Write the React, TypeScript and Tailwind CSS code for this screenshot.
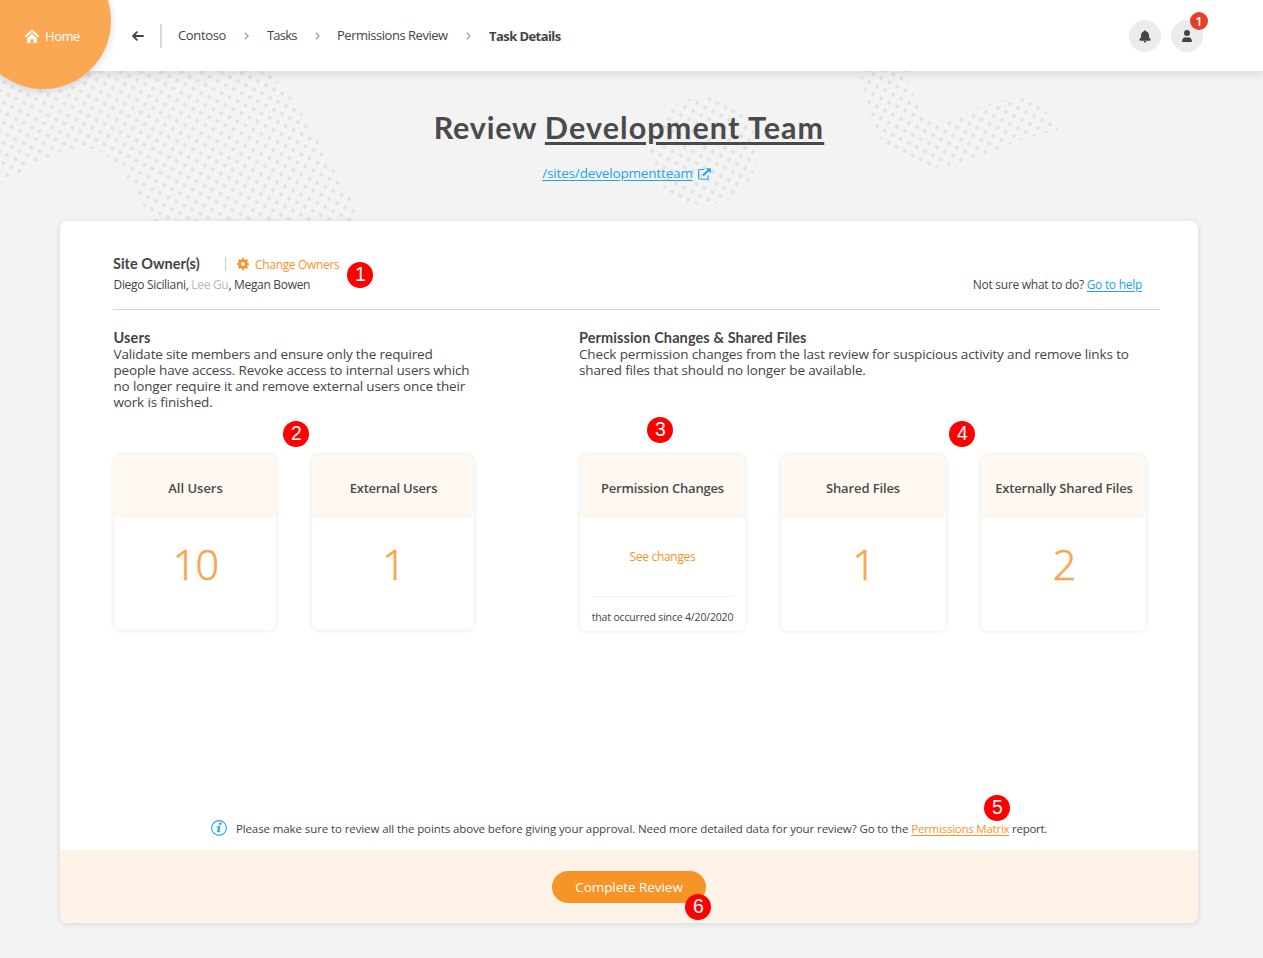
import type { ReactNode } from "react";

function DotPattern() {
  return (
    <svg className="absolute left-0 top-0" width="1263" height="222" viewBox="0 0 1263 222" aria-hidden="true">
      <defs>
        <pattern id="dots-left" width="9.01" height="9.01" patternUnits="userSpaceOnUse" patternTransform="translate(92.1 148) rotate(27.2) translate(-4.505 -4.505)">
          <circle cx="4.505" cy="4.505" r="2.05" fill="#e2e2e2" />
        </pattern>
        <pattern id="dots-middle" width="9.01" height="9.01" patternUnits="userSpaceOnUse" patternTransform="translate(709.4 99.2) rotate(27.2) translate(-4.505 -4.505)">
          <circle cx="4.505" cy="4.505" r="2.05" fill="#e2e2e2" />
        </pattern>
        <pattern id="dots-right" width="9.01" height="9.01" patternUnits="userSpaceOnUse" patternTransform="translate(937.2 127.2) rotate(27.2) translate(-4.505 -4.505)">
          <circle cx="4.505" cy="4.505" r="2.05" fill="#e2e2e2" />
        </pattern>
      </defs>
      <path
        fill="url(#dots-left)"
        d="M0 60H258Q276 78 290 96Q304 115 319 143L351 199L359 222H153Q148 213 134 189L123 171Q108 150 83 147Q60 149 32 166L0 184Z"
      />
      <circle cx="703.5" cy="151" r="54" fill="url(#dots-middle)" />
      <path
        fill="url(#dots-right)"
        d="M858 60H903L908 80L919 109Q925 120 940 121Q955 119 985 105L1010 98Q1030 95 1047 112L1059 129Q1058 132 1045 133L1021 140L985 154L956 167Q935 169 917 163Q890 155 880 137Q870 115 862 81Z"
      />
    </svg>
  );
}

function HomeIcon() {
  return (
    <svg width="14" height="15" viewBox="0 0 14 15" fill="none">
      <path d="M1 7.3L7 1.7L13 7.3" stroke="white" strokeWidth="2" strokeLinecap="round" strokeLinejoin="round" />
      <path d="M2.2 9.2L7 4.9L11.8 9.2V13.2Q11.8 14 11 14H8.6V10.8Q8.6 10 7 10Q5.4 10 5.4 10.8V14H3Q2.2 14 2.2 13.2Z" fill="white" />
    </svg>
  );
}

function BackArrow() {
  return (
    <svg width="12" height="10" viewBox="0 0 12 10" fill="none" stroke="#444" strokeWidth="1.8" strokeLinecap="round" strokeLinejoin="round">
      <path d="M11 5H1.4M4.9 1.2L1.1 5L4.9 8.8" />
    </svg>
  );
}

function Chevron() {
  return (
    <svg className="shrink-0" width="5" height="8" viewBox="0 0 5 8" fill="none" stroke="#a6a6a6" strokeWidth="1.4">
      <path d="M0.8 0.8L4 4L0.8 7.2" />
    </svg>
  );
}

function BellIcon() {
  return (
    <svg width="12" height="13" viewBox="0 0 12 13" fill="#444">
      <path d="M6 0.3Q6.9 0.3 6.9 1.3Q9.7 2 9.8 5Q9.9 8.2 11.6 9.3Q12 10.6 11 10.7H1Q0 10.6 0.4 9.3Q2.1 8.2 2.2 5Q2.3 2 5.1 1.3Q5.1 0.3 6 0.3Z" />
      <path d="M4.6 11H7.4Q7.2 12.5 6 12.5Q4.8 12.5 4.6 11Z" />
    </svg>
  );
}

function PersonIcon() {
  return (
    <svg width="10" height="12" viewBox="0 0 10 12" fill="#444">
      <circle cx="5" cy="3" r="3" />
      <path d="M0 12Q0.1 7.2 3.6 7.2Q5 7.8 6.4 7.2Q9.9 7.2 10 12Z" />
    </svg>
  );
}

function ExternalIcon() {
  return (
    <svg width="13" height="12" viewBox="0 0 13 12" fill="none">
      <path d="M6.3 1.5H2Q0.6 1.5 0.6 2.9V9.9Q0.6 11.3 2 11.3H8.8Q10.2 11.3 10.2 9.9V7.4" stroke="#23a3ee" strokeWidth="1.1" />
      <path d="M4.9 7.6L10.6 2.3" stroke="#23a3ee" strokeWidth="2" />
      <path d="M7.8 0.2H12.9V5.3Z" fill="#23a3ee" />
    </svg>
  );
}

function GearIcon() {
  return (
    <svg width="12" height="12" viewBox="0 0 12 12">
      <g fill="#f79428">
        <rect x="4.8" y="0" width="2.4" height="12" rx="0.4" />
        <rect x="4.8" y="0" width="2.4" height="12" rx="0.4" transform="rotate(45 6 6)" />
        <rect x="4.8" y="0" width="2.4" height="12" rx="0.4" transform="rotate(90 6 6)" />
        <rect x="4.8" y="0" width="2.4" height="12" rx="0.4" transform="rotate(135 6 6)" />
        <circle cx="6" cy="6" r="4.6" />
      </g>
      <circle cx="6" cy="6" r="1.9" fill="white" />
    </svg>
  );
}

function InfoIcon() {
  return (
    <svg width="16" height="16" viewBox="0 0 16 16" fill="none">
      <circle cx="8" cy="8" r="7.4" stroke="#23a3ee" strokeWidth="1.1" />
      <circle cx="9.3" cy="3.8" r="1.3" fill="#23a3ee" />
      <path d="M5.7 7.1Q7.2 6 8.7 6.2L7.3 11.8Q8 12.1 9.5 10.9" stroke="#23a3ee" strokeWidth="1" />
      <path d="M8.3 6.2L6.9 12" stroke="#23a3ee" strokeWidth="1.9" />
    </svg>
  );
}

function Marker({ n, place }: { n: number; place: string }) {
  return (
    <span
      className={`absolute flex size-[26px] items-center justify-center rounded-full bg-[#fe0000] font-['Liberation_Sans',sans-serif] text-[19.5px] leading-none text-white ${place}`}
    >
      {n}
    </span>
  );
}

function StatCard({ title, spacing, size, children }: { title: string; spacing: string; size: string; children: ReactNode }) {
  return (
    <div className={`flex shrink-0 flex-col overflow-hidden rounded-[7px] bg-white shadow-[0_0_5px_rgba(0,0,0,0.11)] ${size}`}>
      <div className={`flex h-[63px] items-center justify-center whitespace-nowrap bg-[#fff8f1] pt-[4px] text-[13px] font-semibold text-[#4a4a4c] ${spacing}`}>
        {title}
      </div>
      {children}
    </div>
  );
}

function Count({ value }: { value: number }) {
  return (
    <div className="pl-px pt-[17px] text-center text-[41.5px] font-light leading-[58px] tracking-[-1px] text-[#faa64f] [-webkit-text-stroke:0.7px_#faa64f]">
      {value}
    </div>
  );
}

export default function App() {
  return (
    <div className="relative flex h-[958px] w-[1263px] flex-col overflow-hidden bg-[#f3f3f3] font-['Open_Sans','Noto_Sans',sans-serif] text-[#444446]">
      <DotPattern />

      <header className="relative flex h-[71px] shrink-0 items-center bg-white shadow-[0_2px_10px_rgba(0,0,0,0.13)]">
        <div className="absolute -left-[25px] -top-[47px] size-[136px] rounded-full bg-[#faa853] shadow-[0_1px_8px_rgba(0,0,0,0.16)]" />
        <a className="relative ml-[25px] flex w-[107px] items-center gap-[6px] pt-[2px] text-[13px] tracking-[-0.45px] text-white">
          <HomeIcon />
          Home
        </a>
        <BackArrow />
        <div className="ml-[16px] h-6 w-[2px] bg-[#d8d8d8]" />
        <nav className="flex items-center text-[13px]">
          <span className="ml-[16px] w-[66px] tracking-[-0.36px]">Contoso</span>
          <Chevron />
          <span className="ml-[18px] w-[48px] tracking-[-0.8px]">Tasks</span>
          <Chevron />
          <span className="ml-[17px] w-[129px] whitespace-nowrap tracking-[-0.48px]">Permissions Review</span>
          <Chevron />
          <span className="ml-[18px] whitespace-nowrap pt-[2px] font-bold tracking-[-0.57px]">Task Details</span>
        </nav>
        <div className="ml-auto mr-[60px] flex gap-[10px] pt-px">
          <div className="flex size-8 items-center justify-center rounded-full bg-[#ececec]">
            <BellIcon />
          </div>
          <div className="relative flex size-8 items-center justify-center rounded-full bg-[#ececec]">
            <PersonIcon />
            <span className="absolute -right-[5px] -top-[8px] flex size-[18px] items-center justify-center rounded-full bg-[#e63f27] pt-px text-[13px] font-semibold leading-none text-white">
              1
            </span>
          </div>
        </div>
      </header>

      <div className="relative flex h-[150px] shrink-0 flex-col items-center pr-[5px] pt-[35px]">
        <h1 className="whitespace-nowrap font-['Lato','Open_Sans',sans-serif] text-[30.5px] font-bold leading-[42px] text-[#4a4a4c]">
          <span className="tracking-[0.78px]">Review </span>
          <span className="tracking-[1.1px] underline decoration-[3px] underline-offset-[3px]">Development Team</span>
        </h1>
        <a className="mt-[15px] flex items-center gap-[5px] pr-[5px] text-[13.5px] leading-5 tracking-[-0.16px] text-[#23a3ee]">
          <span className="underline underline-offset-2">/sites/developmentteam</span>
          <span className="pt-[2px]">
            <ExternalIcon />
          </span>
        </a>
      </div>

      <main className="relative ml-[60px] flex h-[702px] w-[1138px] shrink-0 flex-col rounded-[8px] bg-white shadow-[0_1px_6px_rgba(0,0,0,0.12)]">
        <section className="ml-[53px] mr-[38px] flex h-[89px] items-end justify-between border-b border-[#d6d6d6] pb-[14px] pr-[18px]">
          <div>
            <div className="flex h-[22px] items-center">
              <h2 className="w-[112px] font-['Lato',sans-serif] text-[14.5px] font-bold">Site Owner(s)</h2>
              <div className="h-[14px] w-px bg-[#c8c8c8]" />
              <a className="ml-[11px] flex items-center gap-[6px] text-[12px] font-normal tracking-[-0.32px] text-[#f79428]">
                <GearIcon />
                <span className="pt-[2px]">Change Owners</span>
              </a>
            </div>
            <p className="pl-[0.5px] text-[12px] leading-5 tracking-[-0.31px]">
              Diego Siciliani, <span className="text-[#b4b8b8]">Lee Gu</span>, Megan Bowen
            </p>
          </div>
          <p className="text-[12px] leading-5 tracking-[-0.28px]">
            Not sure what to do? <a className="text-[#23a3ee] underline underline-offset-2">Go to help</a>
          </p>
        </section>

        <div className="ml-[53px] flex pt-[20px]">
          <section className="w-[466px]">
            <div className="h-[125px] pl-[0.5px]">
              <h2 className="font-['Lato',sans-serif] text-[14.5px] font-bold leading-4 tracking-[0.13px]">Users</h2>
              <p className="w-[370px] text-[13.5px] leading-4 tracking-[-0.16px]">
                Validate site members and ensure only the required
                <br />
                people have access. Revoke access to internal users which
                <br />
                no longer require it and remove external users once their
                <br />
                work is finished.
              </p>
            </div>
            <div className="flex gap-[36px] pl-px">
              <StatCard title="All Users" spacing="tracking-normal pl-px" size="h-[175px] w-[162px]">
                <Count value={10} />
              </StatCard>
              <StatCard title="External Users" spacing="tracking-[-0.24px] pl-px" size="h-[175px] w-[162px]">
                <Count value={1} />
              </StatCard>
            </div>
          </section>

          <section>
            <div className="h-[125px]">
              <h2 className="font-['Lato',sans-serif] text-[14.5px] font-bold leading-4 tracking-[0.1px]">
                Permission Changes &amp; Shared Files
              </h2>
              <p className="whitespace-nowrap text-[13.5px] leading-4 tracking-[-0.13px]">
                Check permission changes from the last review for suspicious activity and remove links to
                <br />
                shared files that should no longer be available.
              </p>
            </div>
            <div className="flex gap-[35.5px] pl-px">
              <StatCard title="Permission Changes" spacing="tracking-[-0.18px]" size="h-[176px] w-[165px]">
                <a className="pt-[29px] text-center text-[12px] leading-5 tracking-[-0.3px] text-[#f79428]">See changes</a>
                <div className="mx-3 mt-[29px] h-px bg-[#efefef]" />
                <p className="whitespace-nowrap pt-[10px] text-center text-[10.5px] leading-5 tracking-[-0.17px]">
                  that occurred since 4/20/2020
                </p>
              </StatCard>
              <StatCard title="Shared Files" spacing="tracking-[-0.12px]" size="h-[176px] w-[165px]">
                <Count value={1} />
              </StatCard>
              <StatCard title="Externally Shared Files" spacing="tracking-[-0.18px] pl-px" size="h-[176px] w-[165px]">
                <Count value={2} />
              </StatCard>
            </div>
          </section>
        </div>

        <div className="mt-auto flex h-[43px] items-start justify-center gap-[9px] whitespace-nowrap text-[11.5px] leading-5 tracking-[-0.1px]">
          <span className="pt-[2px]">
            <InfoIcon />
          </span>
          <p className="pt-px">
            Please make sure to review all the points above before giving your approval. Need more detailed data for your review? Go to the{" "}
            <a className="tracking-[-0.24px] text-[#f79428] underline underline-offset-2">Permissions Matrix</a>
            <span className="tracking-[-0.27px]"> report.</span>
          </p>
        </div>
        <footer className="-mt-[11px] flex h-[73px] shrink-0 items-center justify-center rounded-b-[8px] bg-[#fff3e8]">
          <button className="h-8 w-[154px] rounded-full bg-[#f79428] pt-[2px] text-[13.5px] tracking-[-0.05px] text-white">Complete Review</button>
        </footer>

        <Marker n={1} place="left-[287.4px] top-[40.5px]" />
        <Marker n={2} place="left-[223.4px] top-[199.5px]" />
        <Marker n={3} place="left-[587.4px] top-[195.5px]" />
        <Marker n={4} place="left-[889.4px] top-[199.5px]" />
        <Marker n={5} place="left-[924.4px] top-[573.5px]" />
        <Marker n={6} place="left-[625.4px] top-[672.5px]" />
      </main>
    </div>
  );
}
